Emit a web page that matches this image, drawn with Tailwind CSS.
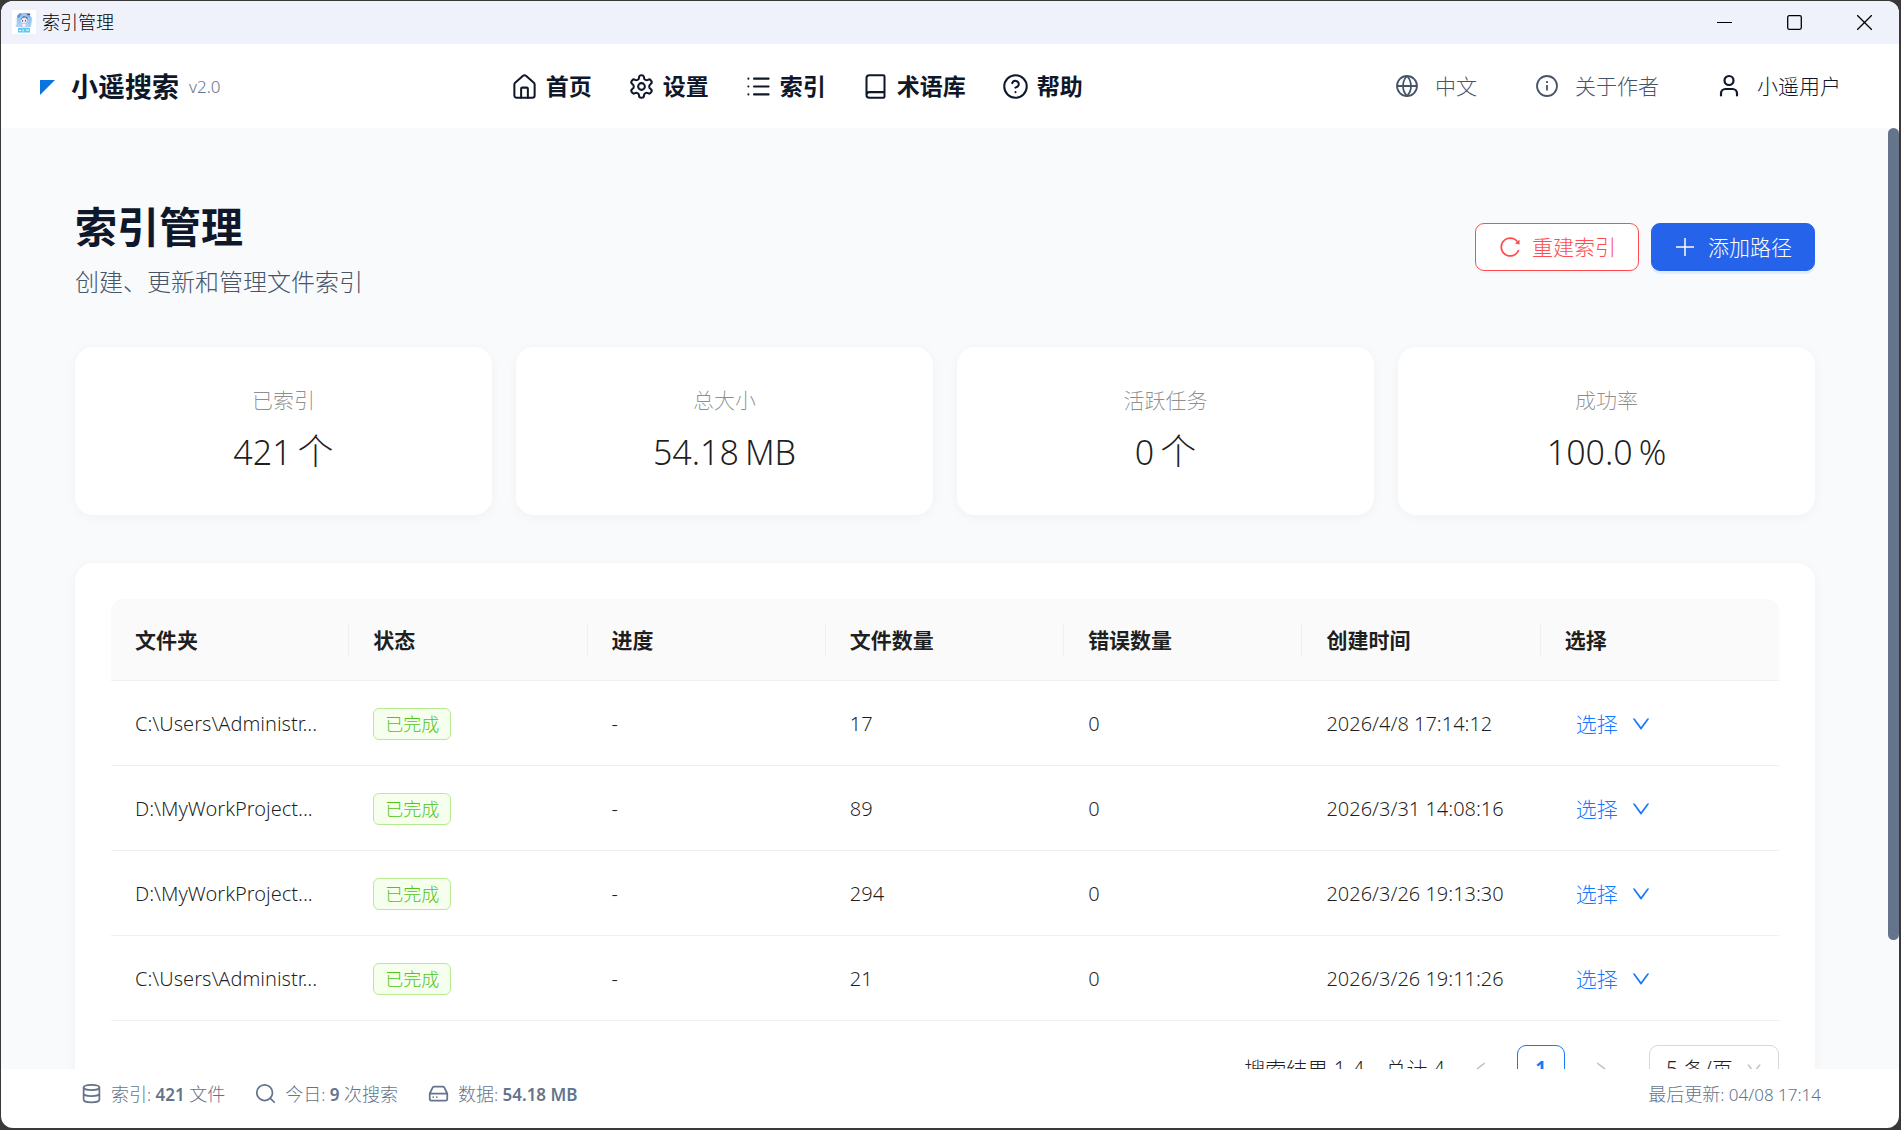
<!DOCTYPE html>
<html lang="zh-CN">
<head>
<meta charset="utf-8">
<title>索引管理</title>
<script src="https://cdn.jsdelivr.net/npm/@tailwindcss/browser@4"></script>
</head>
<body class="h-screen overflow-hidden bg-[#3a3838] pt-px pl-px pr-0.5 pb-0.5 font-['Noto_Sans','Noto_Sans_CJK_SC',sans-serif] font-light">
<svg class="hidden">
  <symbol id="down" viewBox="0 0 1024 1024"><path fill="currentColor" d="M884 256h-75c-5.1 0-9.9 2.5-12.9 6.6L512 654.2 227.9 262.6c-3-4.1-7.8-6.6-12.9-6.6h-75c-6.5 0-10.3 7.4-6.5 12.7l352.6 486.1c12.8 17.6 39 17.6 51.7 0l352.6-486.1c3.9-5.3.1-12.7-6.4-12.7z"/></symbol>
  <symbol id="left" viewBox="0 0 1024 1024"><path fill="currentColor" d="M724 218.3V141c0-6.7-7.7-10.4-12.9-6.3L260.3 486.8a31.86 31.86 0 000 50.3l450.8 352.1c5.3 4.1 12.9.4 12.9-6.3v-77.3c0-4.9-2.3-9.6-6.1-12.6l-360-281 360-281.1c3.8-3 6.1-7.7 6.1-12.6z"/></symbol>
</svg>
<div class="flex h-full flex-col overflow-hidden rounded-xl bg-white">

  <!-- Title bar -->
  <div class="flex h-[43px] shrink-0 items-center justify-between bg-[#eff2fa] pl-[11px]">
    <div class="flex items-center gap-1.5 pb-0.5 text-lg leading-6 text-black">
      <svg class="size-6" viewBox="0 0 24 24"><rect width="24" height="24" fill="#fff"/><circle cx="12" cy="11" r="8.500" fill="#d3f0fb"/><path d="M4 16c2-2 1-5 1-8 1-4 4-5 7-5 4 0 7 2 8 6 0 3-2 5-1 8l-4-1-6 1z" fill="#9cc8f2"/><path d="M5 7c0-3 3-4 5-3L7 8z" fill="#5f92dc"/><path d="M13 3c3 0 5 2 5 5l-3-3z" fill="#6fa6e6"/><ellipse cx="12" cy="10" rx="3.200" ry="3.200" fill="#fbe6e4"/><path d="M8.500 9l3-3 4 1v3l-2-2.500-3 .5-1.500 2z" fill="#4a78c0"/><path d="M10 10h1v1.500h-1zM13 10h1v1.500h-1z" fill="#3a4f88"/><path d="M7 3h2v1.500H7z" fill="#e58ab8"/><path d="M15.500 3.500H18V5h-2.500z" fill="#334a7c"/><path d="M3 16l5-3 4 1.500 4-1.500 3 4H5z" fill="#b4cdf0"/><path d="M10 13.500l2 1 2-1-1 3h-2z" fill="#fff"/><path d="M6 18h12v4.500H6z" fill="#5cc8f4"/><path d="M7 20.500h2m2-1v2m3-1.500h3" stroke="#fff"/></svg>
      <span>索引管理</span>
    </div>
    <div class="flex pb-px">
      <button aria-label="最小化" class="flex h-[42px] w-[70px] items-center justify-center"><svg class="size-[15px]" viewBox="0 0 15 15" stroke="#000"><path d="M0 7.500h15"/></svg></button>
      <button aria-label="最大化" class="flex h-[42px] w-[70px] items-center justify-center"><svg class="size-[15px]" viewBox="0 0 15 15" fill="none" stroke="#000" stroke-width="1.300"><rect x=".7" y=".7" width="13.600" height="13.600" rx="1.500"/></svg></button>
      <button aria-label="关闭" class="flex h-[42px] w-[70px] items-center justify-center"><svg class="size-[15px]" viewBox="0 0 15 15" stroke="#000" stroke-width="1.300"><path d="M0 0l15 15M15 0L0 15"/></svg></button>
    </div>
  </div>

  <!-- App header -->
  <header class="flex h-[84px] shrink-0 items-center justify-between px-9 text-[#0f172a]">
    <div class="flex items-center pt-0.5">
      <svg class="mr-4 ml-[3px] size-[15px]" viewBox="0 0 15 15"><path d="M0 0h15L0 15z" fill="#0b74de"/></svg>
      <span class="text-[27px] leading-9 font-bold">小遥搜索</span>
      <span class="ml-2.5 text-[17px] leading-6 text-[#64748b]">v2.0</span>
    </div>
    <nav class="flex gap-9 text-[23px] leading-8 font-bold">
      <a href="#" class="flex items-center gap-2"><svg class="size-[27px]" viewBox="0 0 24 24" fill="none" stroke="currentColor" stroke-width="1.800" stroke-linecap="round" stroke-linejoin="round"><path d="M3 10.200a2 2 0 0 1 .7-1.500l7-6.200a2 2 0 0 1 2.600 0l7 6.200a2 2 0 0 1 .7 1.500V20a2 2 0 0 1-2 2H5a2 2 0 0 1-2-2z"/><path d="M9 22v-8a1 1 0 0 1 1-1h4a1 1 0 0 1 1 1v8"/></svg>首页</a>
      <a href="#" class="flex items-center gap-2"><svg class="size-[27px]" viewBox="0 0 24 24" fill="none" stroke="currentColor" stroke-width="1.800" stroke-linecap="round" stroke-linejoin="round"><path d="M12.220 2h-.44a2 2 0 0 0-2 2v.18a2 2 0 0 1-1 1.730l-.43.250a2 2 0 0 1-2 0l-.15-.08a2 2 0 0 0-2.730.730l-.22.380a2 2 0 0 0 .730 2.730l.150.100a2 2 0 0 1 1 1.720v.510a2 2 0 0 1-1 1.740l-.15.090a2 2 0 0 0-.73 2.730l.220.380a2 2 0 0 0 2.730.730l.150-.08a2 2 0 0 1 2 0l.430.250a2 2 0 0 1 1 1.730V20a2 2 0 0 0 2 2h.440a2 2 0 0 0 2-2v-.18a2 2 0 0 1 1-1.730l.430-.25a2 2 0 0 1 2 0l.150.080a2 2 0 0 0 2.730-.73l.220-.39a2 2 0 0 0-.73-2.730l-.15-.08a2 2 0 0 1-1-1.740v-.5a2 2 0 0 1 1-1.740l.150-.09a2 2 0 0 0 .730-2.730l-.22-.38a2 2 0 0 0-2.730-.73l-.15.080a2 2 0 0 1-2 0l-.43-.25a2 2 0 0 1-1-1.730V4a2 2 0 0 0-2-2z"/><circle cx="12" cy="12" r="3"/></svg>设置</a>
      <a href="#" class="flex items-center gap-2"><svg class="size-[27px]" viewBox="0 0 24 24" fill="none" stroke="currentColor" stroke-width="1.800" stroke-linecap="round" stroke-linejoin="round"><path d="M8 5h13M8 12h13M8 19h13M3 5h.01M3 12h.01M3 19h.01"/></svg>索引</a>
      <a href="#" class="flex items-center gap-2"><svg class="size-[27px]" viewBox="0 0 24 24" fill="none" stroke="currentColor" stroke-width="1.800" stroke-linecap="round" stroke-linejoin="round"><path d="M4 19.500v-15A2.500 2.500 0 0 1 6.500 2H19a1 1 0 0 1 1 1v18a1 1 0 0 1-1 1H6.500a1 1 0 0 1 0-5H20"/></svg>术语库</a>
      <a href="#" class="flex items-center gap-2"><svg class="size-[27px]" viewBox="0 0 24 24" fill="none" stroke="currentColor" stroke-width="1.800" stroke-linecap="round" stroke-linejoin="round"><circle cx="12" cy="12" r="10"/><path d="M9.090 9a3 3 0 0 1 5.830 1c0 2-3 3-3 3M12 17h.01"/></svg>帮助</a>
    </nav>
    <div class="flex gap-3.5 text-[21px] leading-8 text-[#475569]">
      <button class="flex items-center gap-4 px-[22px]"><svg class="size-6" viewBox="0 0 24 24" fill="none" stroke="currentColor" stroke-width="1.800"><circle cx="12" cy="12" r="10"/><path d="M12 2a14.500 14.500 0 0 0 0 20 14.500 14.500 0 0 0 0-20M2 12h20"/></svg>中文</button>
      <button class="flex items-center gap-4 px-[22px]"><svg class="size-6" viewBox="0 0 24 24" fill="none" stroke="currentColor" stroke-width="1.800"><circle cx="12" cy="12" r="10"/><path d="M12 16.500V11M12 9V7"/></svg>关于作者</button>
      <button class="flex items-center gap-4 px-[22px] text-[#0f172a]"><svg class="size-6" viewBox="0 0 24 24" fill="none" stroke="currentColor" stroke-width="2.200" stroke-linecap="round"><circle cx="12" cy="6.500" r="4.500"/><path d="M4 21.500v-2a4.500 4.500 0 0 1 4.500-4.500h7a4.500 4.500 0 0 1 4.500 4.500v2"/></svg>小遥用户</button>
    </div>
  </header>

  <!-- Scrolling content -->
  <main class="relative min-h-0 flex-1 overflow-hidden bg-[#f8fafc] pt-[68px] pr-[84px] pl-[74px]">
    <div class="absolute top-0 right-0 h-[812px] w-[11px] rounded-full bg-[#64748b]"></div>

    <div class="flex items-center justify-between">
      <div>
        <h1 class="text-[42px] leading-[62px] font-bold text-[#0f172a]">索引管理</h1>
        <p class="mt-1.5 text-2xl leading-9 text-[#475569]">创建、更新和管理文件索引</p>
      </div>
      <div class="flex gap-3 pb-0.5 text-[21px] leading-8">
        <button class="flex h-12 w-[164px] items-center justify-center gap-2.5 rounded-[9px] border border-[#ff4d4f] bg-white text-[#ff4d4f] shadow-[0_3px_0_rgba(0,0,0,0.02)]"><svg class="size-6" viewBox="0 0 1024 1024"><path fill="currentColor" d="M909.1 209.3l-56.4 44.1C775.8 155.1 656.2 92 521.9 92 290 92 102.3 279.5 102 511.5 101.7 743.7 289.8 932 521.9 932c181.3 0 335.8-115 394.6-276.1 1.5-4.2-.7-8.9-4.9-10.3l-56.7-19.5a8 8 0 00-10.1 4.8c-1.8 5-3.8 10-5.9 14.9-17.3 41-42.1 77.8-73.7 109.4A344.77 344.77 0 01655.9 829c-42.3 17.9-87.4 27-133.8 27-46.5 0-91.5-9.1-133.8-27A341.5 341.5 0 01279 755.200a342.16 342.16 0 01-73.7-109.4c-17.9-42.4-27-87.4-27-133.9s9.1-91.5 27-133.9c17.3-41 42.1-77.8 73.7-109.4 31.6-31.6 68.4-56.4 109.3-73.8 42.3-17.9 87.4-27 133.8-27 46.5 0 91.5 9.1 133.8 27a341.5 341.5 0 01109.3 73.8c9.9 9.9 19.2 20.4 27.8 31.4l-60.2 47a8 8 0 003 14.1l175.6 43c5 1.2 9.9-2.6 9.9-7.7l.8-180.9c-.1-6.6-7.8-10.3-13-6.2z"/></svg>重建索引</button>
        <button class="flex h-12 w-[164px] items-center justify-center gap-2.5 rounded-[9px] border border-[#2563eb] bg-[#2563eb] text-white shadow-[0_3px_0_rgba(5,145,255,0.1)]"><svg class="size-6" viewBox="0 0 24 24" stroke="currentColor" stroke-width="1.500"><path d="M11 3v18M2 12h18"/></svg>添加路径</button>
      </div>
    </div>

    <section class="mt-[47px] grid grid-cols-4 gap-6 text-center">
      <div class="h-[168px] rounded-[18px] bg-white pt-[37px] shadow-[0_2px_12px_rgba(0,0,0,0.04)]">
        <div class="text-[21px] leading-8 text-black/45">已索引</div>
        <div class="mt-[9px] text-[34px] leading-[54px] text-black/88">421<span class="ml-1.5 text-4xl leading-[54px]">个</span></div>
      </div>
      <div class="h-[168px] rounded-[18px] bg-white pt-[37px] shadow-[0_2px_12px_rgba(0,0,0,0.04)]">
        <div class="text-[21px] leading-8 text-black/45">总大小</div>
        <div class="mt-[9px] text-[34px] leading-[54px] text-black/88">54.18<span class="ml-1.5">MB</span></div>
      </div>
      <div class="h-[168px] rounded-[18px] bg-white pt-[37px] shadow-[0_2px_12px_rgba(0,0,0,0.04)]">
        <div class="text-[21px] leading-8 text-black/45">活跃任务</div>
        <div class="mt-[9px] text-[34px] leading-[54px] text-black/88">0<span class="ml-1.5 text-4xl leading-[54px]">个</span></div>
      </div>
      <div class="h-[168px] rounded-[18px] bg-white pt-[37px] shadow-[0_2px_12px_rgba(0,0,0,0.04)]">
        <div class="text-[21px] leading-8 text-black/45">成功率</div>
        <div class="mt-[9px] text-[34px] leading-[54px] text-black/88">100.0<span class="ml-1.5">%</span></div>
      </div>
    </section>

    <section class="mt-12 rounded-[18px] bg-white p-9 text-black/88 shadow-[0_2px_12px_rgba(0,0,0,0.04)]">
      <table class="w-full table-fixed border-separate border-spacing-0 text-left text-xl leading-8">
        <thead>
          <tr class="text-[21px] [&>th]:h-[82px] [&>th]:border-b [&>th]:border-[#f0f0f0] [&>th]:bg-[#fafafa] [&>th]:p-0">
            <th class="rounded-tl-xl"><div class="border-r border-[#f0f0f0] pl-6">文件夹</div></th>
            <th><div class="border-r border-[#f0f0f0] pl-6">状态</div></th>
            <th><div class="border-r border-[#f0f0f0] pl-6">进度</div></th>
            <th><div class="border-r border-[#f0f0f0] pl-6">文件数量</div></th>
            <th><div class="border-r border-[#f0f0f0] pl-6">错误数量</div></th>
            <th><div class="border-r border-[#f0f0f0] pl-6">创建时间</div></th>
            <th class="rounded-tr-xl"><div class="pl-6">选择</div></th>
          </tr>
        </thead>
        <tbody class="[&_td]:h-[85px] [&_td]:border-b [&_td]:border-[#f0f0f0] [&_td]:px-6 [&_td]:pt-0.5 [&_td]:pb-0">
          <tr>
            <td class="whitespace-nowrap">C:\Users\Administr...</td>
            <td><div class="flex"><span class="rounded-md border border-[#b7eb8f] bg-[#f6ffed] px-[11px] text-lg leading-[30px] text-[#52c41a]">已完成</span></div></td>
            <td>-</td><td>17</td><td>0</td><td class="whitespace-nowrap">2026/4/8 17:14:12</td>
            <td><button class="flex items-center gap-3 pl-[11px] text-[21px] text-[#1677ff]">选择<svg class="size-[22px]"><use href="#down"/></svg></button></td>
          </tr>
          <tr>
            <td class="whitespace-nowrap">D:\MyWorkProject...</td>
            <td><div class="flex"><span class="rounded-md border border-[#b7eb8f] bg-[#f6ffed] px-[11px] text-lg leading-[30px] text-[#52c41a]">已完成</span></div></td>
            <td>-</td><td>89</td><td>0</td><td class="whitespace-nowrap">2026/3/31 14:08:16</td>
            <td><button class="flex items-center gap-3 pl-[11px] text-[21px] text-[#1677ff]">选择<svg class="size-[22px]"><use href="#down"/></svg></button></td>
          </tr>
          <tr>
            <td class="whitespace-nowrap">D:\MyWorkProject...</td>
            <td><div class="flex"><span class="rounded-md border border-[#b7eb8f] bg-[#f6ffed] px-[11px] text-lg leading-[30px] text-[#52c41a]">已完成</span></div></td>
            <td>-</td><td>294</td><td>0</td><td class="whitespace-nowrap">2026/3/26 19:13:30</td>
            <td><button class="flex items-center gap-3 pl-[11px] text-[21px] text-[#1677ff]">选择<svg class="size-[22px]"><use href="#down"/></svg></button></td>
          </tr>
          <tr>
            <td class="whitespace-nowrap">C:\Users\Administr...</td>
            <td><div class="flex"><span class="rounded-md border border-[#b7eb8f] bg-[#f6ffed] px-[11px] text-lg leading-[30px] text-[#52c41a]">已完成</span></div></td>
            <td>-</td><td>21</td><td>0</td><td class="whitespace-nowrap">2026/3/26 19:11:26</td>
            <td><button class="flex items-center gap-3 pl-[11px] text-[21px] text-[#1677ff]">选择<svg class="size-[22px]"><use href="#down"/></svg></button></td>
          </tr>
        </tbody>
      </table>
      <div class="mt-6 flex items-center justify-end gap-3 text-[21px] leading-8">
        <span>搜索结果 1-4，总计 4</span>
        <button aria-label="上一页" class="flex size-12 items-center justify-center text-black/25"><svg class="size-[18px]"><use href="#left"/></svg></button>
        <button class="size-12 rounded-[9px] border border-[#1677ff] font-semibold text-[#1677ff]">1</button>
        <button aria-label="下一页" class="flex size-12 items-center justify-center text-black/25"><svg class="size-[18px] -scale-x-100"><use href="#left"/></svg></button>
        <div class="relative ml-3">
          <select aria-label="每页条数" class="h-12 w-[130px] appearance-none rounded-[9px] border border-[#d9d9d9] bg-white pl-4"><option>5 条/页</option></select>
          <svg class="pointer-events-none absolute top-[15px] right-4 size-[18px] text-black/25"><use href="#down"/></svg>
        </div>
      </div>
    </section>
  </main>

  <!-- Status bar -->
  <footer class="flex h-[59px] shrink-0 items-center justify-between pr-[78px] pb-2.5 pl-20 text-[17px] leading-6 text-[#64748b]">
    <div class="flex gap-[30px]">
      <div class="flex items-center gap-[9px]"><svg class="size-[21px]" viewBox="0 0 24 24" fill="none" stroke="currentColor" stroke-width="2"><ellipse cx="12" cy="5" rx="9" ry="3"/><path d="M3 5v14c0 1.700 4 3 9 3s9-1.300 9-3V5M3 12c0 1.700 4 3 9 3s9-1.300 9-3"/></svg><span><span class="text-lg">索引</span>: <b class="font-semibold">421</b> <span class="text-lg">文件</span></span></div>
      <div class="flex items-center gap-[9px]"><svg class="size-[21px]" viewBox="0 0 24 24" fill="none" stroke="currentColor" stroke-width="2" stroke-linecap="round"><circle cx="11" cy="11" r="9"/><path d="M22 22l-4.500-4.500"/></svg><span><span class="text-lg">今日</span>: <b class="font-semibold">9</b> <span class="text-lg">次搜索</span></span></div>
      <div class="flex items-center gap-[9px]"><svg class="size-[21px]" viewBox="0 0 24 24" fill="none" stroke="currentColor" stroke-width="2" stroke-linecap="round" stroke-linejoin="round"><path d="M22 12H2M5.450 5.110L2 12v6a2 2 0 0 0 2 2h16a2 2 0 0 0 2-2v-6l-3.450-6.890A2 2 0 0 0 16.760 4H7.240a2 2 0 0 0-1.790 1.110zM6 16h.01M10 16h.01"/></svg><span><span class="text-lg">数据</span>: <b class="font-semibold">54.18 MB</b></span></div>
    </div>
    <span><span class="text-lg">最后更新</span>: 04/08 17:14</span>
  </footer>
</div>
</body>
</html>
